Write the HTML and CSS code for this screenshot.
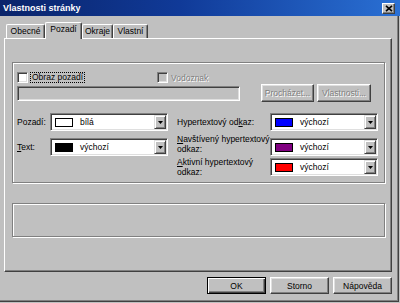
FILE: index.html
```html
<!DOCTYPE html>
<html lang="cs">
<head>
<meta charset="utf-8">
<title>Vlastnosti stránky</title>
<link rel="stylesheet" href="styles.css">
</head>
<body>
<div class="titlebar">
  <span class="title">Vlastnosti stránky</span>
  <span class="close"><svg width="8" height="7" viewBox="0 0 8 7"><path d="M1 0.8L7 6.2M7 0.8L1 6.2" stroke="#000" stroke-width="1.6"/></svg></span>
</div>
<div class="frame">
  <div class="tabs">
    <div class="tab tab-obecne">Obecné</div>
    <div class="tab tab-pozadi active">Pozadí</div>
    <div class="tab tab-okraje">Okraje</div>
    <div class="tab tab-vlastni">Vlastní</div>
  </div>
  <div class="panel">
    <div class="group g1">
      <div class="row-check">
        <div class="opt opt-first"><span class="check"></span><span class="focus">Obraz pozadí</span></div>
        <div class="opt"><span class="check disabled"></span><span class="opt-label dis">Vodoznak</span></div>
      </div>
      <div class="row-file">
        <span class="field"></span>
        <span class="btn dis b-browse">Procházet...</span>
        <span class="btn dis b-props">Vlastnosti...</span>
      </div>
      <div class="colors">
        <div class="lbl c1 r1">Pozadí:</div>
        <div class="combo c2 r1"><span class="sw sw-white"></span><span class="ct">bílá</span><span class="dd"><svg width="5" height="3" viewBox="0 0 5 3"><path d="M0 0H5L2.5 3Z" fill="#000"/></svg></span></div>
        <div class="lbl lbl-r c3 r1">Hypertextový od<u>k</u>az:</div>
        <div class="combo c4 r1"><span class="sw sw-blue"></span><span class="ct">výchozí</span><span class="dd"><svg width="5" height="3" viewBox="0 0 5 3"><path d="M0 0H5L2.5 3Z" fill="#000"/></svg></span></div>

        <div class="lbl c1 r2"><u>T</u>ext:</div>
        <div class="combo c2 r2"><span class="sw sw-black"></span><span class="ct">výchozí</span><span class="dd"><svg width="5" height="3" viewBox="0 0 5 3"><path d="M0 0H5L2.5 3Z" fill="#000"/></svg></span></div>
        <div class="lbl lbl-r lbl2 lbl-visited c3 r2"><u>N</u>avštívený hypertextový<br>odkaz:</div>
        <div class="combo c4 r2"><span class="sw sw-purple"></span><span class="ct">výchozí</span><span class="dd"><svg width="5" height="3" viewBox="0 0 5 3"><path d="M0 0H5L2.5 3Z" fill="#000"/></svg></span></div>

        <div class="lbl lbl-r lbl2 lbl-active c3 r3"><u>A</u>ktivní hypertextový<br>odkaz:</div>
        <div class="combo c4 r3"><span class="sw sw-red"></span><span class="ct">výchozí</span><span class="dd"><svg width="5" height="3" viewBox="0 0 5 3"><path d="M0 0H5L2.5 3Z" fill="#000"/></svg></span></div>
      </div>
    </div>
    <div class="group g2"></div>
  </div>
  <div class="actions">
    <span class="abtn default">OK</span>
    <span class="abtn">Storno</span>
    <span class="abtn">Nápověda</span>
  </div>
</div>
</body>
</html>
```
FILE: styles.css
```css
* { box-sizing: border-box; }
html, body { margin: 0; padding: 0; }
body {
  width: 400px;
  height: 303px;
  overflow: hidden;
  background: #c0c0c0;
  font-family: "Liberation Sans", Arial, sans-serif;
  font-size: 8.5px;
  color: #000;
}
u { text-decoration: underline; text-underline-offset: 1px; }

.titlebar {
  height: 16px;
  display: flex;
  justify-content: space-between;
  align-items: flex-start;
  padding: 0 5px 0 3px;
  background: linear-gradient(90deg, #0a246a 0%, #103a98 45%, #2a70d4 100%);
}
.title {
  color: #fff;
  font-weight: bold;
  font-size: 9px;
  line-height: 13px;
  padding-top: 2px;
}
.close {
  margin-top: 3px;
  width: 13px;
  height: 11px;
  background: #c0c0c0;
  border: 1px solid;
  border-color: #fff #404040 #404040 #fff;
  box-shadow: inset -1px -1px #808080;
  display: flex;
  align-items: center;
  justify-content: center;
}

.frame {
  width: 399px;
  height: 286px;
  padding: 6px 6px 0 4px;
  border-right: 1px solid #404040;
  border-bottom: 1px solid #404040;
  box-shadow: inset -1px -1px #808080;
}

.tabs {
  display: flex;
  align-items: flex-end;
  height: 16px;
  padding-left: 2px;
}
.tab {
  height: 14px;
  line-height: 12px;
  text-align: center;
  background: #c0c0c0;
  border-top: 1px solid #fff;
  border-left: 1px solid #fff;
  border-right: 1px solid #404040;
  box-shadow: inset -1px 0 #808080;
  border-radius: 2px 2px 0 0;
}
.tab-obecne { width: 39px; }
.tab-pozadi { width: 37px; }
.tab-okraje { width: 31px; }
.tab-vlastni { width: 35px; }
.tab.active {
  height: 17px;
  line-height: 13px;
  margin-bottom: -1px;
  position: relative;
  z-index: 1;
}

.panel {
  height: 234px;
  border: 1px solid;
  border-color: #fff #404040 #404040 #fff;
  box-shadow: inset -1px -1px #808080;
  padding: 23px 0 0 7px;
}

.group {
  width: 373px;
  border: 1px solid #808080;
  box-shadow: inset 1px 1px #fff, 1px 1px #fff;
}
.g1 { padding: 9px 0 6px 4px; }
.g2 { height: 34px; margin-top: 20px; }

.row-check {
  display: flex;
  align-items: center;
  height: 11px;
}
.opt { display: flex; align-items: center; }
.opt-first { width: 140px; }
.check {
  flex: none;
  width: 11px;
  height: 11px;
  background: #fff;
  border: 1px solid;
  border-color: #808080 #fff #fff #808080;
  box-shadow: inset 1px 1px #404040, inset -1px -1px #dfdfdf;
}
.check.disabled { background: #c0c0c0; }
.focus {
  margin-left: 2px;
  border: 1px dotted #000;
  padding: 0 1px;
  line-height: 9px;
}
.opt-label { margin-left: 3px; }
.dis { color: #808080; text-shadow: 1px 1px 0 #fff; }

.row-file {
  display: flex;
  align-items: center;
  height: 18px;
  margin-top: 1px;
}
.field {
  width: 223px;
  height: 15px;
  background: #c0c0c0;
  border: 1px solid;
  border-color: #808080 #fff #fff #808080;
  box-shadow: inset 1px 1px #404040, inset -1px -1px #dfdfdf;
}
.btn {
  height: 18px;
  display: flex;
  align-items: center;
  justify-content: center;
  background: #c0c0c0;
  border: 1px solid;
  border-color: #fff #404040 #404040 #fff;
  box-shadow: inset -1px -1px #808080, inset 1px 1px #dfdfdf;
}
.b-browse { width: 53px; margin-left: 21px; }
.b-props { width: 54px; margin-left: 3px; }

.colors {
  display: grid;
  grid-template-columns: 33px 118px 102px 108px;
  grid-template-rows: 25px 20px 18px;
  margin-top: 11px;
}
.c1 { grid-column: 1; }
.c2 { grid-column: 2; }
.c3 { grid-column: 3; }
.c4 { grid-column: 4; }
.r1 { grid-row: 1; }
.r2 { grid-row: 2; }
.r3 { grid-row: 3; }

.lbl {
  height: 18px;
  line-height: 18px;
  white-space: nowrap;
}
.lbl-r { padding-left: 9px; }
.lbl2 { height: auto; line-height: 10px; }
.lbl-visited { margin-top: -4px; }
.lbl-active { margin-top: -1px; }

.combo {
  height: 18px;
  display: flex;
  align-items: center;
  background: #fff;
  border: 1px solid;
  border-color: #808080 #fff #fff #808080;
  box-shadow: inset 1px 1px #404040, inset -1px -1px #dfdfdf;
  padding: 1px 1px 1px 4px;
}
.sw {
  flex: none;
  width: 18px;
  height: 9px;
  border: 1px solid #000;
}
.sw-white { background: #fff; }
.sw-black { background: #000; }
.sw-blue { background: #0000ff; }
.sw-purple { background: #800080; }
.sw-red { background: #ff0000; }
.ct { margin-left: 7px; }
.dd {
  margin-left: auto;
  width: 12px;
  height: 14px;
  background: #c0c0c0;
  border: 1px solid;
  border-color: #dfdfdf #404040 #404040 #dfdfdf;
  box-shadow: inset 1px 1px #fff, inset -1px -1px #808080;
  display: flex;
  align-items: center;
  justify-content: center;
}

.actions {
  display: flex;
  justify-content: flex-end;
  gap: 4px;
  margin-top: 5px;
}
.abtn {
  width: 59px;
  height: 17px;
  display: flex;
  align-items: center;
  justify-content: center;
  background: #c0c0c0;
  border: 1px solid;
  border-color: #fff #404040 #404040 #fff;
  box-shadow: inset -1px -1px #808080, inset 1px 1px #dfdfdf;
}
.abtn.default {
  border: 1px solid #000;
  box-shadow: inset 1px 1px #fff, inset -1px -1px #404040, inset -2px -2px #808080;
}
```
